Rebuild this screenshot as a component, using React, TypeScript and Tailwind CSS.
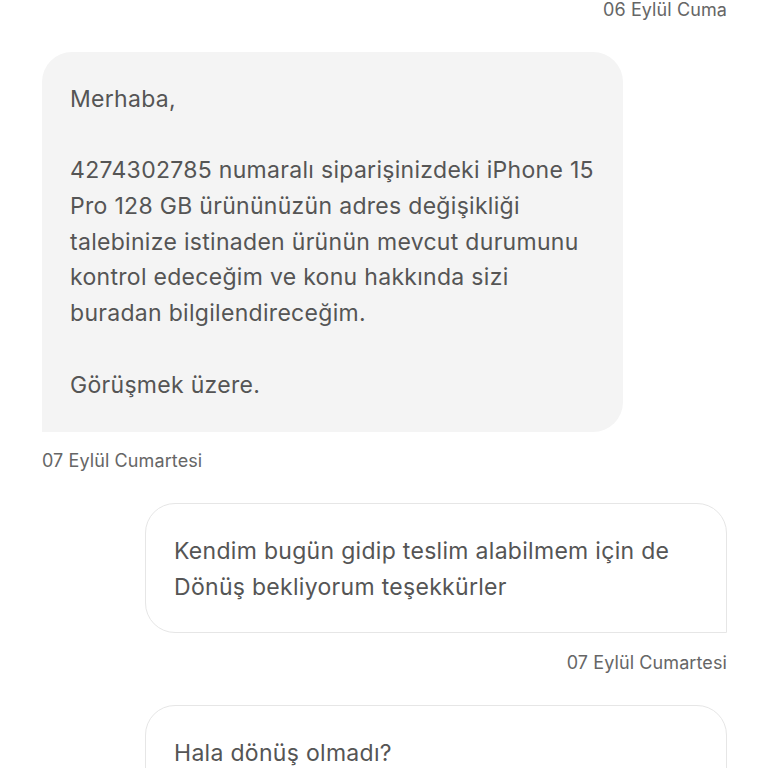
import React from 'react';

const font = { fontFamily: 'Inter, "Noto Sans", sans-serif' };

const DateLabel: React.FC<{ text: string; align: 'left' | 'right'; className?: string }> = ({ text, align, className }) => (
  <div
    className={`text-[18px] leading-[20px] tracking-[0.1px] text-[#666666] ${align === 'right' ? 'text-right' : 'text-left'} ${className ?? ''}`}
  >
    {text}
  </div>
);

const incomingLines = [
  'Merhaba,',
  '',
  '4274302785 numaralı siparişinizdeki iPhone 15',
  'Pro 128 GB ürününüzün adres değişikliği',
  'talebinize istinaden ürünün mevcut durumunu',
  'kontrol edeceğim ve konu hakkında sizi',
  'buradan bilgilendireceğim.',
  '',
  'Görüşmek üzere.',
];

const msgText = 'text-[23px] tracking-[0.3px] text-[#555555] whitespace-nowrap';

export default function App() {
  return (
    <div className="w-[768px] h-[768px] overflow-hidden bg-white" style={font}>
      <div className="flex flex-col pl-[42px] pr-[41px]">
        <DateLabel text="06 Eylül Cuma" align="right" />

        <div className="mt-[32px] w-[581px] bg-[#f4f4f4] rounded-t-[30px] rounded-br-[30px] pl-[28px] pr-[20px] pt-[30px] pb-[29px]">
          {incomingLines.map((line, i) => (
            <div key={i} className={`${msgText} leading-[35.7px] h-[35.7px]`}>
              {line}
            </div>
          ))}
        </div>

        <DateLabel text="07 Eylül Cumartesi" align="left" className="mt-[19px]" />

        <div className="mt-[32px] self-end w-[582px] bg-white border border-[#e6e6e6] rounded-t-[30px] rounded-bl-[30px] pl-[28px] pr-[20px] pt-[29px] pb-[27px]">
          <div className={`${msgText} leading-[36px]`}>Kendim bugün gidip teslim alabilmem için de</div>
          <div className={`${msgText} leading-[36px]`}>Dönüş bekliyorum teşekkürler</div>
        </div>

        <DateLabel text="07 Eylül Cumartesi" align="right" className="mt-[20px]" />

        <div className="mt-[32px] self-end w-[582px] bg-white border border-[#e6e6e6] rounded-t-[30px] rounded-bl-[30px] pl-[28px] pr-[20px] pt-[29px] pb-[27px]">
          <div className={`${msgText} leading-[36px]`}>Hala dönüş olmadı?</div>
        </div>
      </div>
    </div>
  );
}
